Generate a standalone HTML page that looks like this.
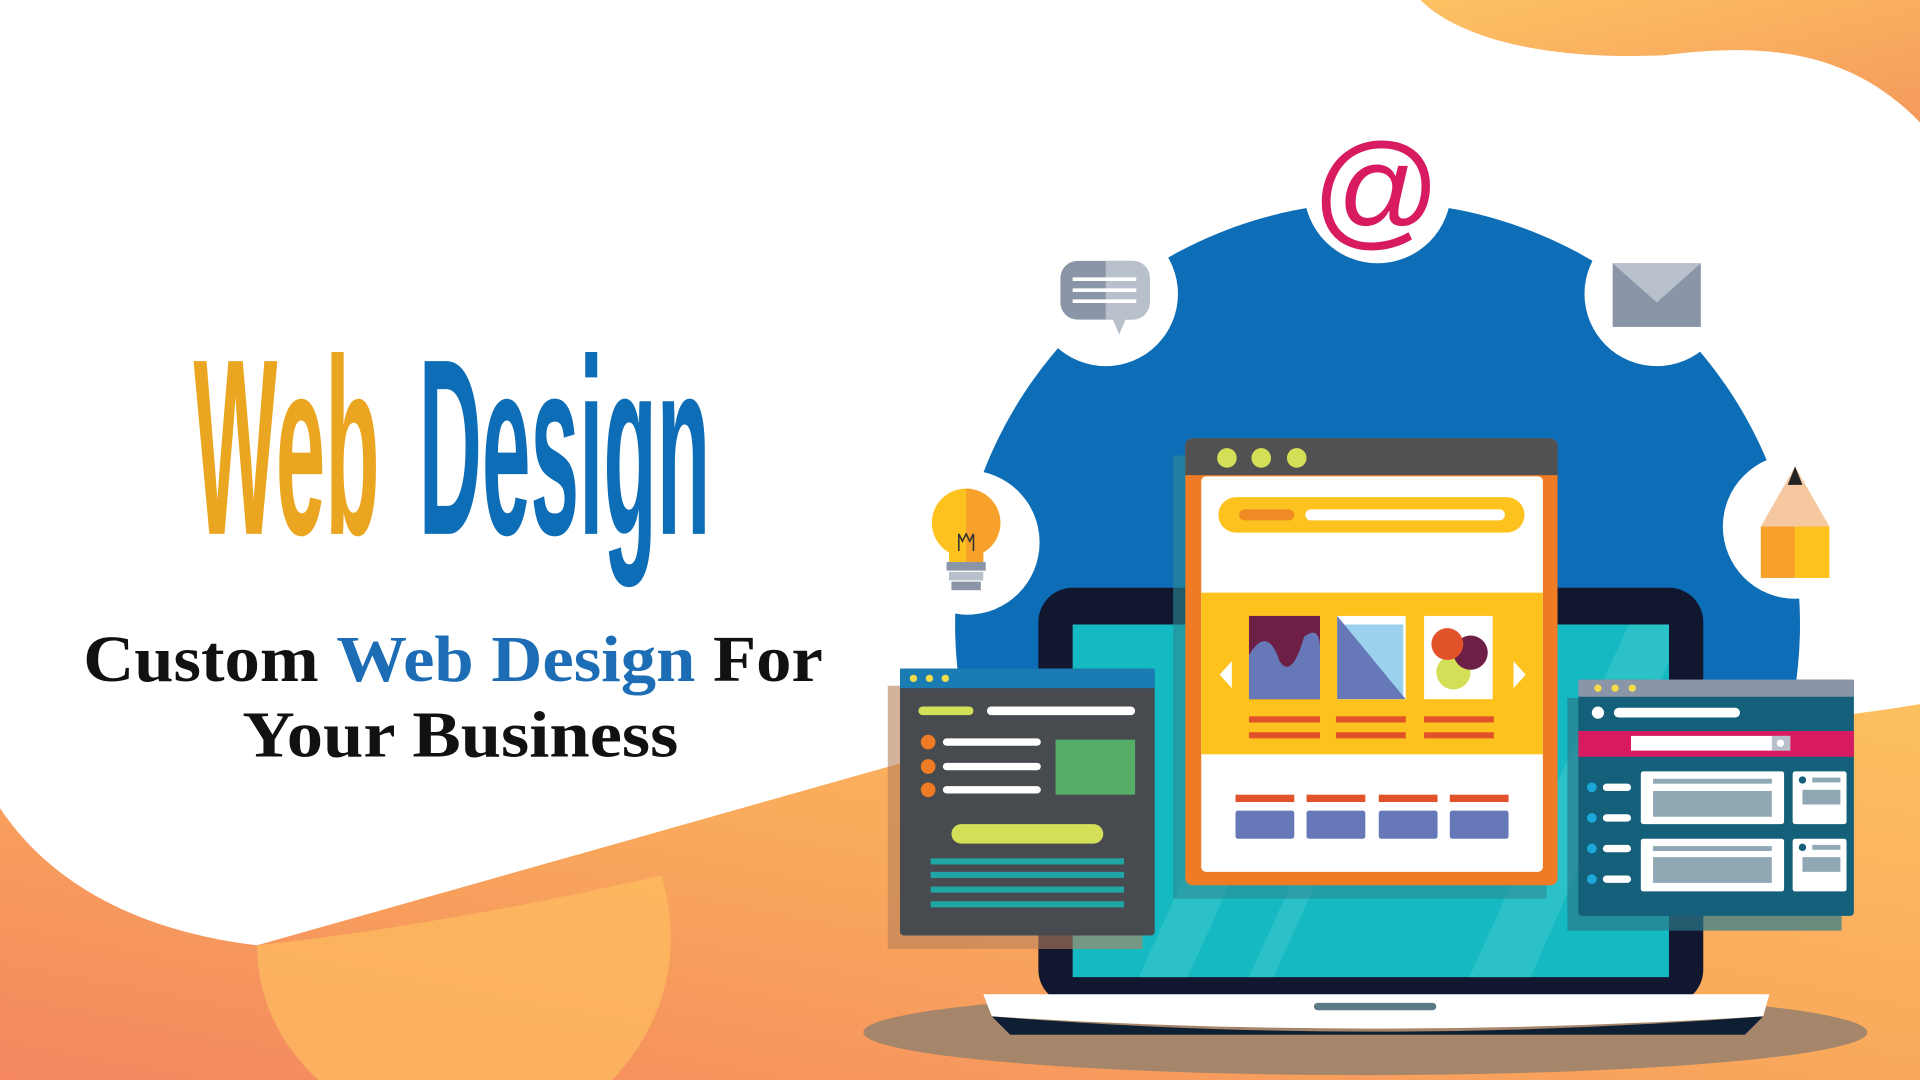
<!DOCTYPE html>
<html><head><meta charset="utf-8"><style>
html,body{margin:0;padding:0;width:1920px;height:1080px;overflow:hidden;background:#fff}
svg{display:block}
</style></head><body>
<svg width="1920" height="1080" viewBox="0 0 1568 882" preserveAspectRatio="none" xmlns="http://www.w3.org/2000/svg">
<defs>
<linearGradient id="og" x1="0" y1="1" x2="1" y2="0"><stop offset="0" stop-color="#f4875f"/><stop offset="0.5" stop-color="#f9a85c"/><stop offset="1" stop-color="#fdc05f"/></linearGradient>
<linearGradient id="og2" x1="0" y1="0" x2="1" y2="1"><stop offset="0" stop-color="#fdc262"/><stop offset="1" stop-color="#f59a5c"/></linearGradient>
</defs>
<rect width="1568" height="882" fill="#fff"/>
<path d="M0 660 C40 720 110 760 210 772 L740 622 C900 600 1300 620 1568 575 L1568 882 L0 882 Z" fill="url(#og)"/>
<path d="M210 772 C320 760 430 740 540 715 C560 780 540 840 500 882 L260 882 C225 850 210 810 210 772 Z" fill="#fdbe60" opacity="0.7"/>
<path d="M1160 0 C1190 30 1260 50 1360 45 C1440 35 1510 40 1568 100 L1568 0 Z" fill="url(#og2)"/>
<circle cx="1125" cy="510" r="345" fill="#0d6db6"/>
<circle cx="1125" cy="155" r="60" fill="#fff"/>
<circle cx="903" cy="240" r="59" fill="#fff"/>
<circle cx="1353" cy="240" r="59" fill="#fff"/>
<circle cx="790" cy="443" r="59" fill="#fff"/>
<circle cx="1466" cy="430" r="59" fill="#fff"/>
<text x="1124" y="190" font-family="Liberation Sans, sans-serif" font-size="104" fill="#d81b60" text-anchor="middle">@</text>
<path d="M880 213 h45 a14 14 0 0 1 14 14 v20 a14 14 0 0 1 -14 14 h-6 l-5 12 l-5 -12 h-29 a14 14 0 0 1 -14 -14 v-20 a14 14 0 0 1 14 -14z" fill="#8a96a8"/>
<path d="M903 213 h22 a14 14 0 0 1 14 14 v20 a14 14 0 0 1 -14 14 h-6 l-5 12 l-5 -12 h-6z" fill="#b8c0cb"/>
<g stroke="#fff" stroke-width="3"><line x1="876" y1="228" x2="928" y2="228"/><line x1="876" y1="237" x2="928" y2="237"/><line x1="876" y1="246" x2="928" y2="246"/></g>
<rect x="1317" y="215" width="72" height="52" fill="#8a96a8"/>
<path d="M1317 215 L1353 247 L1389 215Z" fill="#b8c0cb"/>
<circle cx="789" cy="427" r="28" fill="#fdc21d"/>
<path d="M789 399 a28 28 0 0 1 0 56z" fill="#f7a02a"/>
<rect x="775" y="447" width="28" height="12" fill="#fdc21d"/>
<rect x="789" y="447" width="14" height="12" fill="#f7a02a"/>
<path d="M783 450 v-14 l3 6 l3 -6 l3 6 l3 -6 v14" stroke="#333" stroke-width="1.3" fill="none"/>
<rect x="773" y="459" width="32" height="7" fill="#8a96a8"/>
<rect x="775" y="467" width="28" height="7" fill="#b8c0cb"/>
<rect x="777" y="475" width="24" height="7" fill="#8a96a8"/>
<path d="M1466 381 L1494 430 L1438 430Z" fill="#f6c8a0"/>
<path d="M1466 381 L1472 396 L1460 396Z" fill="#222"/>
<rect x="1438" y="430" width="28" height="42" fill="#f7a02a"/>
<rect x="1466" y="430" width="28" height="42" fill="#fdc21d"/>
<ellipse cx="1115" cy="843" rx="410" ry="35" fill="#a6866a"/>
<rect x="848" y="480" width="543" height="340" rx="28" fill="#11172e"/>
<rect x="876" y="510" width="487" height="288" fill="#14b9c1"/>
<path d="M930 798 L1060 510 L1100 510 L970 798Z M1020 798 L1150 510 L1170 510 L1040 798Z M1200 798 L1330 510 L1363 510 L1363 540 L1250 798Z" fill="#3cc6cd" opacity="0.6"/>
<path d="M803 812 H1445 L1440 830 Q1120 850 810 830Z" fill="#fff"/>
<path d="M810 830 Q1120 855 1440 830 L1425 845 H825Z" fill="#0f1f33"/>
<rect x="1073" y="819" width="100" height="6" rx="3" fill="#5b7a86"/>
<rect x="958" y="372" width="305" height="362" fill="#2b8a94" opacity="0.6"/>
<rect x="968" y="358" width="304" height="365" rx="6" fill="#ef7b24"/>
<path d="M968 364 a6 6 0 0 1 6 -6 h292 a6 6 0 0 1 6 6 v24 h-304z" fill="#515151"/>
<circle cx="1002" cy="374" r="8" fill="#d3df57"/><circle cx="1030" cy="374" r="8" fill="#d3df57"/><circle cx="1059" cy="374" r="8" fill="#d3df57"/>
<rect x="981" y="389" width="279" height="323" rx="4" fill="#fff"/>
<rect x="995" y="406" width="250" height="29" rx="14.5" fill="#fdc21d"/>
<rect x="1012" y="416" width="45" height="9" rx="4.5" fill="#ef8a24"/>
<rect x="1066" y="416" width="163" height="9" rx="4.5" fill="#fff"/>
<rect x="981" y="484" width="279" height="132" fill="#fdc21d"/>
<path d="M1006 540 L996 551 L1006 562Z" fill="#fff"/><path d="M1236 540 L1246 551 L1236 562Z" fill="#fff"/>
<rect x="1020" y="503" width="58" height="68" fill="#6d1f45"/>
<path d="M1020 571 V535 Q1035 510 1045 540 Q1055 555 1065 520 Q1078 510 1078 530 V571Z" fill="#6678b7"/>
<rect x="1092" y="503" width="56" height="68" fill="#fff"/>
<rect x="1098" y="510" width="48" height="58" fill="#9bd1ec"/>
<path d="M1092 503 L1148 571 H1092Z" fill="#6678b7"/>
<rect x="1163" y="503" width="56" height="68" fill="#fff"/>
<circle cx="1187" cy="549" r="14" fill="#d3df57"/><circle cx="1201" cy="533" r="14" fill="#6d1f45"/><circle cx="1182" cy="526" r="13" fill="#e2522a"/>
<g fill="#e2522a"><rect x="1020" y="585" width="58" height="5"/><rect x="1020" y="598" width="58" height="5"/><rect x="1091" y="585" width="57" height="5"/><rect x="1091" y="598" width="57" height="5"/><rect x="1163" y="585" width="57" height="5"/><rect x="1163" y="598" width="57" height="5"/>
<rect x="1009" y="649" width="48" height="6"/><rect x="1067" y="649" width="48" height="6"/><rect x="1126" y="649" width="48" height="6"/><rect x="1184" y="649" width="48" height="6"/></g>
<g fill="#6678b7"><rect x="1009" y="662" width="48" height="23" rx="2"/><rect x="1067" y="662" width="48" height="23" rx="2"/><rect x="1126" y="662" width="48" height="23" rx="2"/><rect x="1184" y="662" width="48" height="23" rx="2"/></g>
<rect x="725" y="560" width="208" height="215" fill="#b8805a" opacity="0.6"/>
<rect x="735" y="546" width="208" height="218" rx="3" fill="#474a4f"/>
<rect x="735" y="546" width="208" height="16" fill="#1a7cb3"/>
<g fill="#f2dc4a"><circle cx="746" cy="554" r="3"/><circle cx="759" cy="554" r="3"/><circle cx="772" cy="554" r="3"/></g>
<rect x="750" y="577" width="45" height="7" rx="3.5" fill="#d3df57"/>
<rect x="806" y="577" width="121" height="7" rx="3.5" fill="#fff"/>
<g fill="#ef7b24"><circle cx="758" cy="606" r="6"/><circle cx="758" cy="626" r="6"/><circle cx="758" cy="645" r="6"/></g>
<g fill="#fff"><rect x="770" y="603" width="80" height="6" rx="3"/><rect x="770" y="623" width="80" height="6" rx="3"/><rect x="770" y="642" width="80" height="6" rx="3"/></g>
<rect x="862" y="604" width="65" height="45" fill="#56ad68"/>
<rect x="777" y="673" width="124" height="16" rx="8" fill="#d3df57"/>
<g fill="#20a5a5"><rect x="760" y="701" width="158" height="5"/><rect x="760" y="712" width="158" height="5"/><rect x="760" y="724" width="158" height="5"/><rect x="760" y="736" width="158" height="5"/></g>
<rect x="1280" y="570" width="224" height="190" fill="#2b7a8a" opacity="0.7"/>
<rect x="1289" y="555" width="225" height="193" rx="3" fill="#145f7a"/>
<rect x="1289" y="555" width="225" height="14" fill="#8a96a8"/>
<g fill="#f2dc4a"><circle cx="1305" cy="562" r="3"/><circle cx="1319" cy="562" r="3"/><circle cx="1333" cy="562" r="3"/></g>
<circle cx="1305" cy="582" r="5" fill="#fff"/>
<rect x="1318" y="578" width="103" height="8" rx="4" fill="#fff"/>
<rect x="1289" y="597" width="225" height="21" fill="#d81b60"/>
<rect x="1332" y="601" width="130" height="12" fill="#fff"/>
<rect x="1447" y="601" width="15" height="12" fill="#b8c0cb"/>
<circle cx="1454" cy="607" r="3" fill="#fff"/>
<g fill="#1ba8d8"><circle cx="1300" cy="643" r="4"/><circle cx="1300" cy="668" r="4"/><circle cx="1300" cy="693" r="4"/><circle cx="1300" cy="718" r="4"/></g>
<g fill="#fff"><rect x="1309" y="640" width="23" height="6" rx="3"/><rect x="1309" y="665" width="23" height="6" rx="3"/><rect x="1309" y="690" width="23" height="6" rx="3"/><rect x="1309" y="715" width="23" height="6" rx="3"/>
<rect x="1340" y="630" width="117" height="43" rx="2"/><rect x="1340" y="685" width="117" height="43" rx="2"/>
<rect x="1464" y="630" width="44" height="43" rx="2"/><rect x="1464" y="685" width="44" height="43" rx="2"/></g>
<g fill="#8fa8b4"><rect x="1350" y="636" width="97" height="4"/><rect x="1350" y="646" width="97" height="21"/><rect x="1350" y="691" width="97" height="4"/><rect x="1350" y="700" width="97" height="21"/>
<rect x="1480" y="635" width="23" height="4"/><rect x="1472" y="645" width="31" height="12"/><rect x="1480" y="690" width="23" height="4"/><rect x="1472" y="700" width="31" height="12"/></g>
<g fill="#145f7a"><circle cx="1472" cy="637" r="3"/><circle cx="1472" cy="692" r="3"/></g>
<text x="158" y="436" font-family="Liberation Sans Narrow, Liberation Sans, sans-serif" font-size="205" font-weight="bold" fill="#eaa620" textLength="152" lengthAdjust="spacingAndGlyphs">Web</text>
<text x="342" y="436" font-family="Liberation Sans Narrow, Liberation Sans, sans-serif" font-size="205" font-weight="bold" fill="#0d6db6" textLength="238" lengthAdjust="spacingAndGlyphs">Design</text>
<text x="370" y="556" font-family="Liberation Serif, serif" font-size="54" font-weight="bold" text-anchor="middle" fill="#111" textLength="604" lengthAdjust="spacingAndGlyphs">Custom <tspan fill="#1c6db5">Web Design</tspan> For</text>
<text x="376" y="618" font-family="Liberation Serif, serif" font-size="54" font-weight="bold" text-anchor="middle" fill="#111" textLength="356" lengthAdjust="spacingAndGlyphs">Your Business</text>
</svg>
</body></html>
